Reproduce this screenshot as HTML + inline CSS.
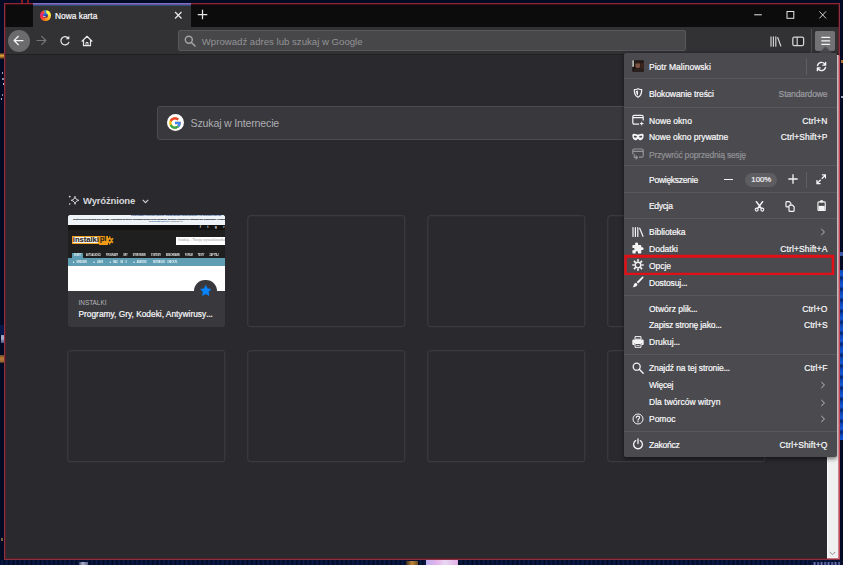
<!DOCTYPE html>
<html lang="pl">
<head>
<meta charset="utf-8">
<title>Nowa karta</title>
<style>
html,body{margin:0;padding:0;}
body{width:843px;height:565px;overflow:hidden;background:#04071f;position:relative;
 font-family:"Liberation Sans",sans-serif;color:#f9f9fa;}
.a{position:absolute;}
.t{position:absolute;white-space:nowrap;line-height:1;}
#win{left:4px;top:3px;width:834px;height:555px;border:1px solid #8a3040;border-top-color:#8c2834;background:#2a2a2e;overflow:hidden;}
/* coordinates inside #win are offset by (5,4) from page */
#tabbar{left:0;top:0;width:834px;height:23px;background:#0c0c0d;}
#tab{left:28px;top:0;width:157.700px;height:23px;background:#323234;}
#tabline{left:28px;top:0;width:157.700px;height:2px;background:linear-gradient(#5a80d4 0,#5a80d4 50%,#2b4a7e 50%,#2b4a7e 100%);}
#nav{left:0;top:23px;width:834px;height:27px;background:#323234;border-bottom:1px solid #1f1f21;}
#url{left:173px;top:26px;width:506px;height:19px;background:#474749;border:1px solid #58585a;border-radius:2px;}
#back{left:3px;top:26px;width:22px;height:22px;border-radius:50%;background:#6b6b6d;}
#sb{left:822px;top:51px;width:11px;height:504px;background:#f0f0f0;border-left:1px solid #fbfbfb;}
#search{left:152px;top:102px;width:528px;height:32px;background:#38383d;border:1px solid #4c4c50;border-radius:3px;}
.tile{position:absolute;width:155.500px;height:110.200px;border:1px solid #3f3f44;border-radius:3px;transform:translate(.3px,.2px);}
#card{left:63px;top:211px;width:157px;height:112px;background:#38383d;border-radius:3px;overflow:hidden;}
#menu{left:619px;top:49px;width:212.500px;height:404px;background:#4a4a4f;border-radius:2px;box-shadow:0 1.500px 4px rgba(0,0,0,.5);}
.sep{position:absolute;left:0;width:212.500px;height:1px;background:#57575c;}
.mi{position:absolute;left:25px;font-size:8.5px;white-space:nowrap;line-height:10px;color:#f9f9fa;-webkit-text-stroke-width:0.2px;}
.el{font-size:6.500px;line-height:0;font-weight:bold;}
.ic{position:absolute;left:7.700px;}
.sc{position:absolute;right:9px;font-size:8.5px;white-space:nowrap;line-height:10px;color:#f9f9fa;-webkit-text-stroke-width:0.2px;}
</style>
</head>
<body>
<!-- desktop wallpaper peeking around the window -->
<div class="a" style="left:0;top:0;width:843px;height:565px;background:#020a24;"></div>
<div class="a" style="left:840px;top:270px;width:3px;height:170px;background:repeating-linear-gradient(#0c46b8 0,#1458d8 5px,#06246c 8px,#0c46b8 11px);"></div>
<div class="a" style="left:840px;top:252px;width:3px;height:4px;background:#3a58a8;"></div>
<div class="a" style="left:841px;top:60px;width:2px;height:3px;background:#b07030;"></div>
<div class="a" style="left:841px;top:96px;width:2px;height:2px;background:#9aa0c0;"></div>
<div class="a" style="left:0;top:53px;width:4px;height:6px;background:linear-gradient(#3a2a18,#e8a838 45%,#c08028 60%,#2a2018);"></div>
<div class="a" style="left:2px;top:72px;width:1px;height:2px;background:#a8a8b8;"></div>
<div class="a" style="left:2px;top:78px;width:2px;height:2px;background:#8888a0;"></div><div class="a" style="left:3px;top:83px;width:1px;height:2px;background:#b8b8c8;"></div>
<div class="a" style="left:2px;top:94px;width:1px;height:2px;background:#9090a8;"></div><div class="a" style="left:1px;top:98px;width:1px;height:2px;background:#b0b0c0;"></div>
<div class="a" style="left:1px;top:335px;width:3px;height:8px;background:linear-gradient(#8a96bc,#aab4d0 40%,#4a5688);"></div><div class="a" style="left:0;top:355px;width:4px;height:8px;background:linear-gradient(#6a4828,#b87a38 40%,#a06a30 80%,#3a2a20);"></div><div class="a" style="left:0;top:325px;width:4px;height:10px;background:#06184a;"></div>
<div class="a" style="left:1px;top:538px;width:2px;height:3px;background:#806040;"></div>
<div class="a" style="left:21px;top:0;width:2px;height:3px;background:#8a1c24;"></div>
<div class="a" style="left:27px;top:0;width:2px;height:3px;background:#7a1820;"></div>
<div class="a" style="left:0;top:560px;width:843px;height:5px;background:repeating-linear-gradient(90deg,#020a24 0,#0a1a48 2px,#020a24 4.500px);"></div>
<div class="a" style="left:426px;top:560px;width:32px;height:5px;background:linear-gradient(90deg,#bcb0ee,#e6b4ea 35%,#e8d8f4 60%,#e2aee6);"></div>
<div class="a" style="left:406px;top:561px;width:12px;height:4px;background:linear-gradient(90deg,#3a2a20,#c08838 50%,#6a4a28);"></div>
<div class="a" style="left:79px;top:562px;width:9px;height:3px;background:linear-gradient(90deg,#3a4468,#a8aec8 40%,#5a6288);"></div>
<div class="a" style="left:813px;top:562px;width:27px;height:3px;background:repeating-linear-gradient(90deg,#0a1440 0,#6a74ac 1.500px,#0a1440 3.500px);"></div>
<div id="win" class="a">
  <div id="tabbar" class="a"></div>
  <div id="tab" class="a"></div>
  <div id="tabline" class="a"></div>
  <div class="t" style="left:50px;top:7.700px;font-size:8.400px;-webkit-text-stroke-width:.2px;">Nowa karta</div>
  <div id="nav" class="a"></div>
  <div id="back" class="a"></div>
  <!-- firefox logo -->
  <div class="a" style="left:34.600px;top:5.600px;width:11px;height:11.300px;border-radius:50%;background:conic-gradient(from 0deg,#3a86d8 0deg,#a8dc50 10deg,#fff450 28deg,#ffe83e 75deg,#ffc02c 120deg,#ff9a20 160deg,#ff7a1c 190deg,#ff4a2c 225deg,#ee2a50 260deg,#de2580 285deg,#f23a3c 318deg,#ff6a28 336deg,#3a86d8 350deg);filter:blur(.35px);"></div>
  <div class="a" style="left:38.200px;top:9.200px;width:4.600px;height:5px;border-radius:50%;background:linear-gradient(170deg,#2a78e4 0,#1c5ccc 45%,#4a2458 62%,#a03040 100%);filter:blur(.3px);"></div>
  <div class="a" style="left:38.300px;top:12.300px;width:3px;height:.9px;background:#f4d8d0;border-radius:1px;transform:rotate(12deg);opacity:.85;"></div>
  <!-- tab close -->
  <svg class="a" style="left:168.900px;top:6.800px;" width="8.600" height="8.600" viewBox="0 0 8 8"><path d="M1 1L7 7M7 1L1 7" stroke="#e6e6e8" stroke-width="1.200" fill="none"/></svg>
  <!-- new tab -->
  <svg class="a" style="left:192px;top:5.200px;" width="11" height="11" viewBox="0 0 11 11"><path d="M5.500 .7V10.300M.7 5.500H10.300" stroke="#e6e6e8" stroke-width="1.250" fill="none"/></svg>
  <!-- window controls -->
  <svg class="a" style="left:745px;top:5px;" width="85" height="12" viewBox="0 0 85 12">
    <path d="M4.200 5.800H11.800" stroke="#e4e4e5" stroke-width="1" fill="none"/>
    <rect x="37" y="2.500" width="6.800" height="6.800" stroke="#e4e4e5" stroke-width="1" fill="none"/>
    <path d="M69.400 2.400L76 9.400M76 2.400L69.400 9.400" stroke="#e4e4e5" stroke-width="0.900" fill="none"/>
  </svg>
  <!-- back arrow -->
  <svg class="a" style="left:8.300px;top:30.700px;" width="11" height="11" viewBox="0 0 11 11"><path d="M10 5.500H1.300M5.300 1.300L1.100 5.500L5.300 9.700" stroke="#f1f1f2" stroke-width="1.250" fill="none" stroke-linecap="round" stroke-linejoin="round"/></svg>
  <!-- forward arrow -->
  <svg class="a" style="left:31.300px;top:30.800px;" width="11" height="11" viewBox="0 0 11 11"><path d="M1 5.500H9.700M5.700 1.300L9.900 5.500L5.700 9.700" stroke="#757577" stroke-width="1.150" fill="none" stroke-linecap="round" stroke-linejoin="round"/></svg>
  <!-- reload -->
  <svg class="a" style="left:54px;top:30.600px;" width="12" height="12" viewBox="0 0 12 12"><path d="M9.300 3.300A4.100 4.100 0 1 0 9.800 7.400" stroke="#e8e8e9" stroke-width="1.250" fill="none" stroke-linecap="round"/><path d="M10.300 0.800V4.300H6.800z" fill="#e8e8e9"/></svg>
  <!-- home -->
  <svg class="a" style="left:76px;top:30.500px;" width="12" height="12" viewBox="0 0 12 12"><path d="M1 6.200L6 1.300L11 6.200M2.500 5.300V10.700H9.500V5.300" stroke="#e8e8e9" stroke-width="1.200" fill="none" stroke-linejoin="round" stroke-linecap="round"/><path d="M5 10.700V7.500H7V10.700" stroke="#e8e8e9" stroke-width="1" fill="none"/></svg>
  <div id="url" class="a"></div>
  <!-- url search icon -->
  <svg class="a" style="left:178.800px;top:31.300px;" width="12" height="12" viewBox="0 0 10 10"><circle cx="4" cy="4" r="2.900" stroke="#a4a4a6" stroke-width="1.200" fill="none"/><path d="M6.200 6.200L9.200 9.200" stroke="#a4a4a6" stroke-width="1.300" stroke-linecap="round"/></svg>
  <div class="t" style="left:196.800px;top:32.500px;font-size:9.620px;color:#939396;">Wprowadź adres lub szukaj w Google</div>
  <!-- library -->
  <svg class="a" style="left:765px;top:31.500px;" width="12" height="11" viewBox="0 0 12 11"><path d="M1 0.800V10.200M3.400 0.800V10.200M5.800 0.800V10.200M7.700 1.500L10.800 10" stroke="#d6d6d8" stroke-width="1.150" fill="none" stroke-linecap="round"/></svg>
  <!-- sidebar -->
  <svg class="a" style="left:787px;top:31.500px;" width="13" height="11" viewBox="0 0 13 11"><rect x="0.800" y="1" width="10.800" height="8.600" rx="1.600" stroke="#d6d6d8" stroke-width="1.250" fill="none"/><path d="M5.200 1V9.600" stroke="#d6d6d8" stroke-width="1.100"/><rect x="6" y="2" width="4.600" height="6.600" fill="#252527"/></svg>
  <div class="a" style="left:806px;top:25px;width:1px;height:24px;background:#4d4d4f;"></div>
  <div class="a" style="left:810px;top:27px;width:20px;height:19.500px;background:#737375;border-radius:2px;"></div>
  <svg class="a" style="left:814.600px;top:32px;" width="11" height="10" viewBox="0 0 11 10"><path d="M1.800 1.400H9.600M1.800 4.900H9.600M1.800 8.300H9.600" stroke="#f3f3f4" stroke-width="1.250" stroke-linecap="round"/></svg>
  <div id="sb" class="a"></div>

  <div id="search" class="a"></div>
  <!-- google logo -->
  <div class="a" style="left:161.800px;top:110px;width:17.200px;height:17.200px;border-radius:50%;background:#fff;"></div>
  <svg class="a" style="left:163.400px;top:111.600px;" width="14" height="14" viewBox="0 0 48 48">
    <path fill="#FBBC05" d="M43.611,20.083H42V20H24v8h11.303c-1.649,4.657-6.080,8-11.303,8c-6.627,0-12-5.373-12-12c0-6.627,5.373-12,12-12c3.059,0,5.842,1.154,7.961,3.039l5.657-5.657C34.046,6.053,29.268,4,24,4C12.955,4,4,12.955,4,24c0,11.045,8.955,20,20,20c11.045,0,20-8.955,20-20C44,22.659,43.862,21.350,43.611,20.083z"/>
    <path fill="#EA4335" d="M6.306,14.691l6.571,4.819C14.655,15.108,18.961,12,24,12c3.059,0,5.842,1.154,7.961,3.039l5.657-5.657C34.046,6.053,29.268,4,24,4C16.318,4,9.656,8.337,6.306,14.691z"/>
    <path fill="#34A853" d="M24,44c5.166,0,9.860-1.977,13.409-5.192l-6.190-5.238C29.211,35.091,26.715,36,24,36c-5.202,0-9.619-3.317-11.283-7.946l-6.522,5.025C9.505,39.556,16.227,44,24,44z"/>
    <path fill="#4285F4" d="M43.611,20.083H42V20H24v8h11.303c-0.792,2.237-2.231,4.166-4.087,5.571c0.001-0.001,0.002-0.001,0.003-0.002l6.190,5.238C36.971,39.205,44,34,44,24C44,22.659,43.862,21.350,43.611,20.083z"/>
  </svg>
  <!-- highlights icon + chevron -->
  <svg class="a" style="left:62.500px;top:190.500px;" width="12" height="11" viewBox="0 0 12 11"><path d="M7 1.300C7.300 3.600 8.200 4.600 10.800 5.300C8.200 6 7.300 7 7 9.300C6.700 7 5.800 6 3.200 5.300C5.800 4.600 6.700 3.600 7 1.300z" stroke="#dcdce0" stroke-width="1" fill="none" stroke-linejoin="round"/><circle cx="1.700" cy="1.600" r=".9" fill="#dcdce0"/><circle cx="1.700" cy="9" r=".8" fill="#dcdce0"/></svg>
  <svg class="a" style="left:136.800px;top:194.800px;" width="7" height="5" viewBox="0 0 7 5"><path d="M.8 .8L3.500 3.600L6.200 .8" stroke="#d0d0d4" stroke-width="1.200" fill="none"/></svg>
  <!-- scrollbar arrows -->
  <svg class="a" style="left:824.300px;top:546.800px;" width="7" height="5" viewBox="0 0 7 5"><path d="M.8 1L3.500 3.700L6.200 1" stroke="#8a8a8a" stroke-width="1" fill="none"/></svg>
  <svg class="a" style="left:824.300px;top:54px;" width="7" height="5" viewBox="0 0 7 5"><path d="M.8 4L3.500 1.300L6.200 4" stroke="#8a8a8a" stroke-width="1" fill="none"/></svg>
  <div class="t" style="left:185.600px;top:114.300px;font-size:10.600px;letter-spacing:-.180px;color:#aeaeb2;">Szukaj w Internecie</div>

  <div class="t" style="left:78px;top:191.700px;font-size:9.500px;letter-spacing:-.150px;font-weight:bold;color:#d7d7db;">Wyróżnione</div>

  <div id="card" class="a">
    <div class="a" id="thumb" style="left:0;top:0;width:158px;height:76px;background:#fff;overflow:hidden;font-family:'Liberation Sans',sans-serif;">
      <!-- cookie notice strip -->
      <div class="a" style="left:0;top:0;width:158px;height:10.300px;background:#eef3f8;"></div>
      <div class="t" style="left:63px;top:0px;font-size:2.400px;font-weight:bold;color:#1f4f8e;">Korzystamy z plików cookies i umożliwiamy zamieszczanie ich osobom trzecim.</div>
      <div class="t" style="left:5px;top:2.900px;font-size:2.300px;color:#33373c;-webkit-text-stroke:.15px #33373c;">Ta strona wykorzystuje pliki cookies. Korzystając ze strony wyrażasz zgodę na ich używanie, zgodnie z aktualnymi ustawieniami przeglądarki. Możesz w każdej chwili zmienić ustawienia cookies.</div>
      <div class="t" style="left:81px;top:6.200px;font-size:2.400px;color:#33373c;"><span style="color:#2c5f9e;font-weight:bold;">przeczytaj więcej</span> o cookies [X]</div>
      <!-- dark header -->
      <div class="a" style="left:0;top:10.300px;width:158px;height:4.900px;background:#121212;"></div>
      <div class="a" style="left:0;top:15.200px;width:158px;height:27.700px;background:#1f1f1f;"></div>
      <div class="t" style="left:131.800px;top:11px;font-size:3.400px;font-weight:bold;color:#e8e8e8;letter-spacing:6.400px;">ftgr</div>
      <!-- logo -->
      <div class="a" style="left:3.700px;top:21px;width:27px;height:8.400px;background:#f6f1e8;border:.6px solid #f0a020;box-sizing:border-box;"></div>
      <div class="t" style="left:4.800px;top:21px;font-size:7.700px;font-weight:bold;color:#1b1b1b;letter-spacing:-.050px;">instalki</div>
      <div class="a" style="left:30.700px;top:20.600px;width:9px;height:9.200px;background:#f39a14;"></div>
      <div class="t" style="left:31.700px;top:20.400px;font-size:8px;font-weight:bold;color:#1b1b1b;letter-spacing:-.300px;">pl</div>
      <svg class="a" style="left:38.500px;top:20.700px;" width="7" height="9" viewBox="0 0 7 9"><circle cx="2.700" cy="4.500" r="2.600" fill="#f39a14"/><path d="M2.700 .4V8.600M.2 2.300L6.200 6.700M.2 6.700L6.200 2.300" stroke="#f39a14" stroke-width="1.500"/><circle cx="2.700" cy="4.500" r="1" fill="#1f1f1f"/></svg>
      <!-- site search -->
      <div class="a" style="left:108.300px;top:22.200px;width:50px;height:7.900px;background:#fff;"></div>
      <div class="t" style="left:110px;top:24.200px;font-size:3.900px;color:#9a9a9a;font-family:'Liberation Serif',serif;">Szukaj... Twoja wyszukiwarka</div>
      <!-- nav tabs -->
      <div class="a" style="left:3.700px;top:37.500px;width:11.800px;height:6px;background:#5f9db3;"></div>
      <div class="t" style="left:6.200px;top:40.100px;font-size:2.700px;font-weight:bold;color:#eef6f9;transform:scaleX(.76);transform-origin:0 0;">START</div>
      <div class="t" style="left:18.300px;top:40.100px;font-size:2.700px;font-weight:bold;color:#f0f0f0;word-spacing:6.100px;transform:scaleX(.76);transform-origin:0 0;">AKTUALNOŚCI PROGRAMY GRY STEROWNIKI SYSTEMY BENCHMARKI FORUM TESTY ZAPYTAJ</div>
      <!-- teal bar -->
      <div class="a" style="left:0;top:43.400px;width:158px;height:7.800px;background:#5f9db3;"></div>
      <div class="t" style="left:5px;top:47.100px;font-size:2.700px;font-weight:bold;color:#f4fafc;word-spacing:2.200px;transform:scaleX(.76);transform-origin:0 0;">■ WINDOWS &#160;&#160;■ LINUX &#160;&#160;■ MAC&#160;OS&#160;X &#160;&#160;■ ANDROID &#160;&#160;NOTEBOOK&#160;CHECK.PL</div>
    </div>
    <div class="a" style="left:126px;top:64.800px;width:22.600px;height:22.600px;border-radius:50%;background:#38383d;"></div>
    <svg class="a" style="left:131.500px;top:70.400px;" width="11.600" height="11" viewBox="0 0 12.600 12"><path d="M6.300 .5L8.050 4.100L12 4.650L9.150 7.450L9.820 11.400L6.300 9.520L2.780 11.400L3.450 7.450L.6 4.650L4.550 4.100z" fill="#0a84ff" stroke="#0a84ff" stroke-width=".7" stroke-linejoin="round"/></svg>
    <div class="t" style="left:10.500px;top:85.300px;font-size:6.400px;color:#b8b8bb;">INSTALKI</div>
    <div class="t" style="left:10.500px;top:95px;font-size:8.350px;color:#f9f9fa;-webkit-text-stroke-width:.2px;">Programy, Gry, Kodeki, Antywirusy<span style="font-size:6.500px;font-weight:bold;">…</span></div>
  </div>
  <div class="tile" style="left:242px;top:211px;"></div>
  <div class="tile" style="left:422px;top:211px;"></div>
  <div class="tile" style="left:602px;top:211px;"></div>
  <div class="tile" style="left:62px;top:346.200px;"></div>
  <div class="tile" style="left:242px;top:346.200px;"></div>
  <div class="tile" style="left:422px;top:346.200px;"></div>
  <div class="tile" style="left:602px;top:346.200px;"></div>

  <svg class="a" style="left:813px;top:42px;" width="15" height="8" viewBox="0 0 15 8"><path d="M0 8L7.500 .5L15 8z" fill="#4a4a4f"/></svg>
  <div id="menu" class="a">
<!--MENUROWS-->
    <svg class="ic" style="top:6.8px;filter:blur(.45px)" width="12" height="12" viewBox="0 0 12 12"><rect x=".3" y=".3" width="11.4" height="11.400" fill="#1d1512"/><rect x=".3" y=".3" width="1.600" height="6.500" fill="#c9c9c4"/><ellipse cx="5.800" cy="5.200" rx="2.500" ry="3" fill="#7a5240"/><rect x="3" y="1.200" width="6" height="2.200" fill="#2a1c16"/><path d="M1 12L2.500 8.500L9.500 8.500L11.700 12z" fill="#2b2220"/><rect x="8.500" y="3" width="3.200" height="6" fill="#3a241c"/></svg>
    <div class="mi" style="top:8.5px;letter-spacing:0.025px;">Piotr Malinowski</div>
    <svg class="ic" style="top:34.4px" width="12" height="12" viewBox="0 0 12 12"><path d="M6 1.700C4.500 2.400 3.300 2.700 2.300 2.700C2.300 6.300 3.100 8.800 6 10.300C8.900 8.800 9.700 6.300 9.700 2.700C8.700 2.700 7.500 2.400 6 1.700z" stroke="#f4f4f5" stroke-width="1.250" fill="none" stroke-linejoin="round"/><path d="M6 3.500C5.300 3.800 4.700 3.900 4 4C4.100 6.100 4.600 7.600 6 8.500z" fill="#f4f4f5"/></svg>
    <div class="mi" style="top:35.9px;letter-spacing:-0.079px;">Blokowanie treści</div>
    <div class="sc" style="top:35.9px;color:#9d9da1;letter-spacing:-0.109px;">Standardowe</div>
    <svg class="ic" style="top:61.1px" width="12" height="12" viewBox="0 0 12 12"><path d="M7 10.200H2.300A1.500 1.500 0 0 1 .8 8.700V2.800A1.500 1.500 0 0 1 2.300 1.300H9.700A1.500 1.500 0 0 1 11.200 2.800V6.500M.8 3.600H11.200" stroke="#f4f4f5" stroke-width="1.200" fill="none"/><path d="M9.700 7.800V11.400M7.900 9.600H11.500" stroke="#f4f4f5" stroke-width="1" fill="none"/></svg>
    <div class="mi" style="top:63.0px;letter-spacing:0.041px;">Nowe okno</div>
    <div class="sc" style="top:63.0px;letter-spacing:0.162px;">Ctrl+N</div>
    <svg class="ic" style="top:77.8px" width="12" height="12" viewBox="0 0 12 12"><path d="M.3 4.300C.3 3.300 1.100 2.800 2.400 2.800C4 2.800 5 3.600 6 3.600C7 3.600 8 2.800 9.600 2.800C10.900 2.800 11.700 3.300 11.700 4.300C11.700 7.100 10.500 9.300 8.600 9.300C7.200 9.300 6.800 7.900 6 7.900C5.200 7.900 4.800 9.300 3.400 9.300C1.500 9.300 .3 7.100 .3 4.300zM1.900 5C2.800 4.400 4.300 4.600 5.100 5.700C4.500 6.700 3 6.900 2.200 6.300C1.800 5.900 1.700 5.400 1.900 5zM10.100 5C9.200 4.400 7.700 4.600 6.900 5.700C7.500 6.700 9 6.900 9.800 6.300C10.200 5.900 10.300 5.400 10.100 5z" fill="#f4f4f5" fill-rule="evenodd"/></svg>
    <div class="mi" style="top:79.1px;letter-spacing:-0.016px;">Nowe okno prywatne</div>
    <div class="sc" style="top:79.1px;letter-spacing:0.073px;">Ctrl+Shift+P</div>
    <svg class="ic" style="top:94.5px" width="12" height="12" viewBox="0 0 12 12"><path d="M7 9.200H9.700A1.500 1.500 0 0 0 11.200 7.700V2.500A1.500 1.500 0 0 0 9.700 1H2.300A1.500 1.500 0 0 0 .8 2.500V6.200M.8 3.300H11.200" stroke="#96969a" stroke-width="1.200" fill="none"/><path d="M2.300 6.600V9.500H5.300M4 8L5.500 9.500L4 11" stroke="#96969a" stroke-width="1.100" fill="none" stroke-linecap="round" stroke-linejoin="round"/></svg>
    <div class="mi" style="top:96.6px;color:#929296;letter-spacing:-0.187px;">Przywróć poprzednią sesję</div>
    <div class="mi" style="top:121.9px;letter-spacing:-0.257px;">Powiększenie</div>
    <div class="mi" style="top:148.4px;letter-spacing:-0.319px;">Edycja</div>
    <svg class="ic" style="top:172.8px" width="12" height="12" viewBox="0 0 12 12"><path d="M1 1.500V10.500M3.400 1.500V10.500M5.800 1.500V10.500M7.700 2.200L11 10.300" stroke="#f4f4f5" stroke-width="1.200" fill="none" stroke-linecap="round"/></svg>
    <div class="mi" style="top:173.8px;letter-spacing:-0.036px;">Biblioteka</div>
    <svg class="a" style="left:196.400px;top:175.1px" width="6" height="8" viewBox="0 0 6 8"><path d="M1.300 1L4.500 4L1.300 7" stroke="#bdbdc0" stroke-width="1" fill="none"/></svg>
    <svg class="ic" style="top:189.3px" width="12" height="12" viewBox="0 0 12 12"><path d="M4.600 .5C5.500 .5 6.100 1.100 6.100 1.800V2.900H8.300C8.900 2.900 9.300 3.300 9.300 3.900V5.300H10.100C11 5.300 11.600 5.900 11.600 6.700C11.600 7.500 11 8.100 10.100 8.100H9.300V10.500C9.300 11.100 8.900 11.500 8.300 11.500H6V10.600C6 9.800 5.500 9.300 4.800 9.300C4.100 9.300 3.600 9.800 3.600 10.600V11.500H1.400C.8 11.500 .4 11.100 .4 10.500V8.300H1.300C2.100 8.300 2.600 7.800 2.600 7.100C2.600 6.400 2.100 5.900 1.300 5.900H.4V3.900C.4 3.300 .8 2.900 1.400 2.900H3.100V1.800C3.100 1.100 3.700 .5 4.600 .5z" fill="#f4f4f5"/></svg>
    <div class="mi" style="top:191.1px;letter-spacing:0.01px;">Dodatki</div>
    <div class="sc" style="top:191.1px;letter-spacing:0.123px;">Ctrl+Shift+A</div>
    <svg class="ic" style="top:206.4px" width="12" height="12" viewBox="0 0 12 12"><g stroke="#f4f4f5" stroke-width="1.700" stroke-linecap="butt"><path d="M6 .3V2.600M6 9.400V11.700M.3 6H2.600M9.400 6H11.700M1.970 1.970L3.600 3.600M8.400 8.400L10.030 10.030M1.970 10.030L3.600 8.400M8.400 3.600L10.030 1.970"/></g><circle cx="6" cy="6" r="2.800" stroke="#f4f4f5" stroke-width="1.350" fill="none"/></svg>
    <div class="mi" style="top:207.6px;letter-spacing:-0.044px;">Opcje</div>
    <svg class="ic" style="top:222.9px" width="12" height="12" viewBox="0 0 12 12"><path d="M11.300 .7C11.700 1.100 11.600 1.500 11.300 1.900L6.200 7.600L4.700 6.100L10.200 .8C10.600 .5 11 .4 11.300 .7zM4 6.800L5.500 8.300C5.300 9.900 4 11.200 .6 11.300C1.800 10.200 1.600 9.200 2 8.300C2.400 7.400 3.200 6.900 4 6.800z" fill="#f4f4f5"/></svg>
    <div class="mi" style="top:224.7px;letter-spacing:-0.131px;">Dostosuj<span class="el">…</span></div>
    <div class="mi" style="top:250.5px;">Otwórz plik<span class="el">…</span></div>
    <div class="sc" style="top:250.5px;letter-spacing:0.084px;">Ctrl+O</div>
    <div class="mi" style="top:267.1px;letter-spacing:-0.147px;">Zapisz stronę jako<span class="el">…</span></div>
    <div class="sc" style="top:267.1px;letter-spacing:-0.077px;">Ctrl+S</div>
    <svg class="ic" style="top:282.8px" width="12" height="12" viewBox="0 0 12 12"><path d="M3 .6H9V3.200H3z" stroke="#f4f4f5" stroke-width="1" fill="none"/><path d="M1.500 3.400H10.500A1.200 1.200 0 0 1 11.700 4.600V8.300A.8 .8 0 0 1 10.900 9.100H9.500V7H2.500V9.100H1.100A.8 .8 0 0 1 .3 8.300V4.600A1.200 1.200 0 0 1 1.500 3.400z" fill="#f4f4f5"/><path d="M3 7.500H9V11.300H3z" stroke="#f4f4f5" stroke-width="1" fill="none"/><path d="M4.300 9.400H7.700" stroke="#f4f4f5" stroke-width=".8"/></svg>
    <div class="mi" style="top:283.8px;">Drukuj<span class="el">…</span></div>
    <svg class="ic" style="top:309.0px" width="12" height="12" viewBox="0 0 12 12"><circle cx="4.700" cy="4.700" r="3.500" stroke="#f4f4f5" stroke-width="1.300" fill="none"/><path d="M7.300 7.300L11.200 11.200" stroke="#f4f4f5" stroke-width="1.400" stroke-linecap="round"/></svg>
    <div class="mi" style="top:310.1px;letter-spacing:-0.093px;">Znajdź na tej stronie<span class="el">…</span></div>
    <div class="sc" style="top:310.1px;letter-spacing:-0.029px;">Ctrl+F</div>
    <div class="mi" style="top:327.1px;letter-spacing:-0.219px;">Więcej</div>
    <svg class="a" style="left:196.400px;top:328.4px" width="6" height="8" viewBox="0 0 6 8"><path d="M1.300 1L4.500 4L1.300 7" stroke="#bdbdc0" stroke-width="1" fill="none"/></svg>
    <div class="mi" style="top:344.2px;letter-spacing:0.03px;">Dla twórców witryn</div>
    <svg class="a" style="left:196.400px;top:345.5px" width="6" height="8" viewBox="0 0 6 8"><path d="M1.300 1L4.500 4L1.300 7" stroke="#bdbdc0" stroke-width="1" fill="none"/></svg>
    <svg class="ic" style="top:359.5px" width="12" height="12" viewBox="0 0 12 12"><circle cx="6" cy="6" r="5" stroke="#f4f4f5" stroke-width="1" fill="none"/><path d="M4.300 4.700C4.300 3.700 5 3.100 6 3.100C7 3.100 7.700 3.700 7.700 4.600C7.700 5.700 6 5.800 6 7.200" stroke="#f4f4f5" stroke-width="1.100" fill="none" stroke-linecap="round"/><circle cx="6" cy="8.800" r=".7" fill="#f4f4f5"/></svg>
    <div class="mi" style="top:360.9px;letter-spacing:-0.014px;">Pomoc</div>
    <svg class="a" style="left:196.400px;top:362.2px" width="6" height="8" viewBox="0 0 6 8"><path d="M1.300 1L4.500 4L1.300 7" stroke="#bdbdc0" stroke-width="1" fill="none"/></svg>
    <svg class="ic" style="top:384.9px" width="12" height="12" viewBox="0 0 12 12"><path d="M3.700 2.600A4.400 4.400 0 1 0 8.300 2.600" stroke="#f4f4f5" stroke-width="1.300" fill="none" stroke-linecap="round"/><path d="M6 .8V5.500" stroke="#f4f4f5" stroke-width="1.300" stroke-linecap="round"/></svg>
    <div class="mi" style="top:386.5px;letter-spacing:-0.232px;">Zakończ</div>
    <div class="sc" style="top:386.5px;letter-spacing:0.102px;">Ctrl+Shift+Q</div>
    <div class="sep" style="top:25.2px;"></div>
    <div class="sep" style="top:54.1px;"></div>
    <div class="sep" style="top:112.3px;"></div>
    <div class="sep" style="top:139.0px;"></div>
    <div class="sep" style="top:165.0px;"></div>
    <div class="sep" style="top:242.1px;"></div>
    <div class="sep" style="top:301.1px;"></div>
    <div class="sep" style="top:378.4px;"></div>
<!--/MENUROWS-->
    <!-- account row: separator + sync -->
    <div class="a" style="left:182px;top:4.500px;width:1px;height:17px;background:#5e5e63;"></div>
    <svg class="a" style="left:191.500px;top:7.500px;" width="11" height="11" viewBox="0 0 16 16"><path fill="#f4f4f5" d="M14 1a1 1 0 0 0-1 1v1.146A6.948 6.948 0 0 0 1.227 6.307a1 1 0 1 0 1.940.484A4.983 4.983 0 0 1 8 3a4.919 4.919 0 0 1 3.967 2H10a1 1 0 0 0 0 2h4a1 1 0 0 0 1-1V2a1 1 0 0 0-1-1zm.046 7.481a1 1 0 0 0-1.213.728A4.983 4.983 0 0 1 8 13a4.919 4.919 0 0 1-3.967-2H6a1 1 0 0 0 0-2H2a1 1 0 0 0-1 1v4a1 1 0 0 0 2 0v-1.146a6.948 6.948 0 0 0 11.773-3.161 1 1 0 0 0-.727-1.212z"/></svg>
    <!-- zoom controls -->
    <div class="a" style="left:100px;top:126px;width:9px;height:1.300px;background:#f4f4f5;"></div>
    <div class="a" style="left:120.500px;top:120px;width:32.500px;height:13.600px;border-radius:7px;background:#5d5d62;"></div>
    <div class="t" style="left:127.300px;top:123.100px;font-size:7.800px;color:#f4f4f5;-webkit-text-stroke-width:.2px;">100%</div>
    <svg class="a" style="left:164px;top:121.300px;" width="10" height="10" viewBox="0 0 10 10"><path d="M5 .3V9.700M.3 5H9.700" stroke="#f4f4f5" stroke-width="1.300"/></svg>
    <div class="a" style="left:182px;top:118.500px;width:1px;height:16.500px;background:#5e5e63;"></div>
    <svg class="a" style="left:191.800px;top:121.300px;" width="10.500" height="10.500" viewBox="0 0 11 11"><path d="M6.200 1H10V4.800M10 1L6 5M4.800 10H1V6.200M1 10L5 6" stroke="#f4f4f5" stroke-width="1.350" fill="none"/></svg>
    <!-- edit controls -->
    <svg class="a" style="left:130px;top:147.700px;" width="11" height="11" viewBox="0 0 11 11"><path d="M2.400 .7L7.600 7.600M8.600 .7L3.400 7.600" stroke="#f4f4f5" stroke-width="1.450" stroke-linecap="round"/><circle cx="2.700" cy="8.600" r="1.500" stroke="#f4f4f5" stroke-width="1.100" fill="none"/><circle cx="8.300" cy="8.600" r="1.500" stroke="#f4f4f5" stroke-width="1.100" fill="none"/></svg>
    <svg class="a" style="left:160.800px;top:147.500px;" width="10.200" height="11" viewBox="0 0 11 12"><path d="M1 1.600A1 1 0 0 1 2 .6H4.500L6.300 2.400V6.500H2A1 1 0 0 1 1 5.500z" stroke="#f4f4f5" stroke-width="1.300" fill="none"/><path d="M4.300 5.500A1 1 0 0 1 5.300 4.500H8L9.900 6.400V10.300A1 1 0 0 1 8.900 11.300H5.300A1 1 0 0 1 4.300 10.300z" stroke="#f4f4f5" stroke-width="1.300" fill="#4a4a4f"/></svg>
    <svg class="a" style="left:192.500px;top:147.200px;" width="9.200" height="11" viewBox="0 0 10 12"><path d="M1 3A1 1 0 0 1 2 2H8A1 1 0 0 1 9 3V10.500A1 1 0 0 1 8 11.500H2A1 1 0 0 1 1 10.500z" stroke="#f4f4f5" stroke-width="1.200" fill="none"/><path d="M3.300 2.300L4 .6H6L6.700 2.300z" fill="#f4f4f5" stroke="#f4f4f5" stroke-width=".8" stroke-linejoin="round"/><rect x="1.600" y="6.400" width="6.800" height="4.600" fill="#f4f4f5"/></svg>
    <!-- red highlight -->
    <svg class="a" style="left:0;top:200px;" width="212" height="24" viewBox="0 0 212 24"><path fill="#e01016" fill-rule="evenodd" d="M.3 1.800H210.200V22.100H.3zM2.800 4.800V19.700H207.700V4.800z"/></svg>
  </div>
  <div class="a" style="left:0;top:0;width:832px;height:553px;border:1px solid rgba(150,15,35,.38);pointer-events:none;z-index:50;"></div>
</div>
<div class="a" style="left:33px;top:3px;width:157.700px;height:1px;background:#7670c8;"></div>
<div class="a" style="left:839px;top:56px;width:1px;height:503px;background:#c2485a;"></div>
<div class="a" style="left:838px;top:56px;width:1px;height:502px;background:#f2c6cd;"></div>
<div class="a" style="left:827px;top:558px;width:12px;height:1px;background:#e9b9c1;"></div>
</body>
</html>
